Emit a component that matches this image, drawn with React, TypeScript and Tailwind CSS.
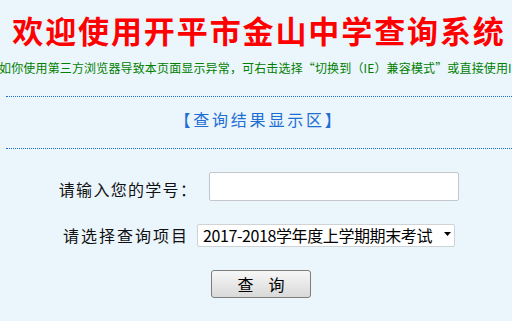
import { useState } from 'react';

const terms = [
  '2017-2018学年度上学期期末考试',
  '2017-2018学年度上学期期中考试',
];

export default function App() {
  const [studentNo, setStudentNo] = useState('');
  const [term, setTerm] = useState(terms[0]);

  return (
    <div className="min-h-screen overflow-hidden bg-[#ebf5fc] pl-[6px] font-['Noto_Sans_CJK_SC',sans-serif] text-[#111]">
      <h1 className="mt-[14px] flex justify-center whitespace-nowrap text-[31px] font-bold leading-[32px] tracking-[1.9px] text-[#ff0000]">
        欢迎使用开平市金山中学查询系统
      </h1>

      <div className="border-b border-dotted border-[#1a6fd6] pb-[21px]">
        <div className="mt-[15px] flex justify-center whitespace-nowrap text-[12px] leading-[14px] tracking-[0.15px] text-[#008000]">
          如你使用第三方浏览器导致本页面显示异常，可右击选择“切换到（IE）兼容模式”或直接使用IE
        </div>
      </div>

      <div className="border-b border-dotted border-[#1a6fd6] pb-[21px] pt-[14px] text-center text-[16px] leading-[16px] tracking-[2.8px] text-[#1e6fd4]">
        【查询结果显示区】
      </div>

      <form
        className="flex flex-col items-center"
        onSubmit={(e) => e.preventDefault()}
      >
        <div className="mt-[23px] flex items-center">
          <label
            htmlFor="xh"
            className="pt-[5px] text-[16px] leading-[16px] tracking-[1.3px]"
          >
            请输入您的学号：
          </label>
          <input
            id="xh"
            value={studentNo}
            onChange={(e) => setStudentNo(e.target.value)}
            className="ml-[12px] h-[29px] w-[250px] rounded-[2px] border border-[#c4c8cc] bg-white px-1 text-[15px] outline-none"
          />
        </div>

        <div className="mt-[22px] flex items-center">
          <label
            htmlFor="xm"
            className="text-[16px] leading-[16px] tracking-[2px]"
          >
            请选择查询项目
          </label>
          <div className="relative ml-[8px]">
            <select
              id="xm"
              value={term}
              onChange={(e) => setTerm(e.target.value)}
              className="h-[23px] w-[258px] appearance-none rounded-[2px] border border-[#cfd3d6] bg-white pl-[5px] text-[16px] leading-[20px] tracking-[-0.4px] text-black outline-none"
            >
              {terms.map((t) => (
                <option key={t}>{t}</option>
              ))}
            </select>
            <svg
              className="pointer-events-none absolute right-[4px] top-[9px]"
              width="7"
              height="4"
              viewBox="0 0 7 4"
            >
              <path d="M0 0h7L3.5 4z" fill="#000" />
            </svg>
          </div>
        </div>

        <button
          type="submit"
          className="ml-[4px] mt-[23px] flex h-[28px] w-[100px] items-center justify-center gap-[15px] rounded-[3px] border border-[#7d7d7d] bg-gradient-to-b from-[#f7f7f7] to-[#d9d9d9] text-[16px] leading-[16px] text-black"
        >
          <span>查</span>
          <span>询</span>
        </button>
      </form>
    </div>
  );
}
